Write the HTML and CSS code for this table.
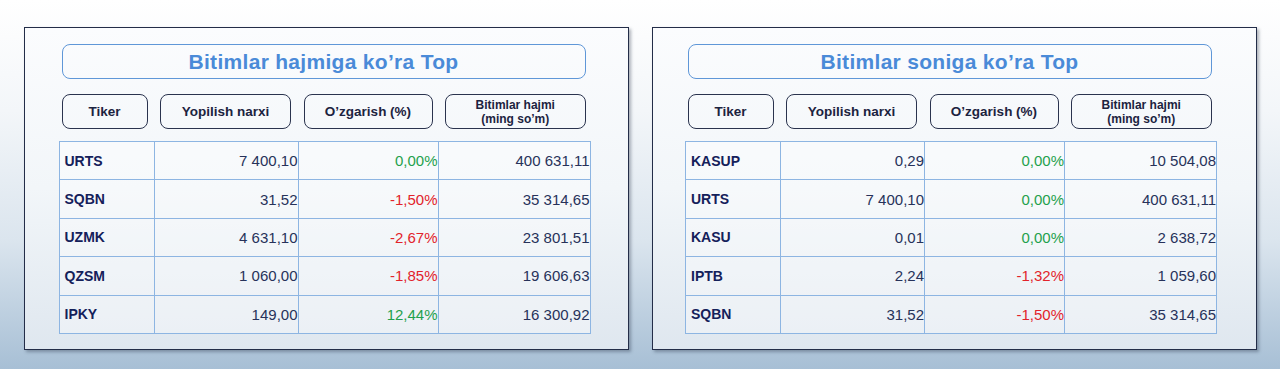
FILE: index.html
```html
<!DOCTYPE html>
<html lang="uz">
<head>
<meta charset="utf-8">
<title>Top</title>
<link rel="stylesheet" href="styles.css">
</head>
<body>
<div class="page">
  <section class="panel panel-left">
    <div class="title">Bitimlar hajmiga ko’ra Top</div>
    <div class="heads">
      <div class="head">Tiker</div>
      <div class="head">Yopilish narxi</div>
      <div class="head">O’zgarish (%)</div>
      <div class="head small">Bitimlar hajmi<br>(ming so’m)</div>
    </div>
    <table class="grid">
      <tr><td class="tk">URTS</td><td>7 400,10</td><td class="up">0,00%</td><td>400 631,11</td></tr>
      <tr><td class="tk">SQBN</td><td>31,52</td><td class="down">-1,50%</td><td>35 314,65</td></tr>
      <tr><td class="tk">UZMK</td><td>4 631,10</td><td class="down">-2,67%</td><td>23 801,51</td></tr>
      <tr><td class="tk">QZSM</td><td>1 060,00</td><td class="down">-1,85%</td><td>19 606,63</td></tr>
      <tr><td class="tk">IPKY</td><td>149,00</td><td class="up">12,44%</td><td>16 300,92</td></tr>
    </table>
  </section>
  <section class="panel panel-right">
    <div class="title">Bitimlar soniga ko’ra Top</div>
    <div class="heads">
      <div class="head">Tiker</div>
      <div class="head">Yopilish narxi</div>
      <div class="head">O’zgarish (%)</div>
      <div class="head small">Bitimlar hajmi<br>(ming so’m)</div>
    </div>
    <table class="grid">
      <tr><td class="tk">KASUP</td><td>0,29</td><td class="up">0,00%</td><td>10 504,08</td></tr>
      <tr><td class="tk">URTS</td><td>7 400,10</td><td class="up">0,00%</td><td>400 631,11</td></tr>
      <tr><td class="tk">KASU</td><td>0,01</td><td class="up">0,00%</td><td>2 638,72</td></tr>
      <tr><td class="tk">IPTB</td><td>2,24</td><td class="down">-1,32%</td><td>1 059,60</td></tr>
      <tr><td class="tk">SQBN</td><td>31,52</td><td class="down">-1,50%</td><td>35 314,65</td></tr>
    </table>
  </section>
</div>
</body>
</html>
```
FILE: styles.css
```css
* { box-sizing: border-box; }
html, body { margin: 0; padding: 0; }
body {
  width: 1280px;
  height: 369px;
  overflow: hidden;
  font-family: "Liberation Sans", Arial, sans-serif;
  background: linear-gradient(180deg, #ffffff 0%, #f3f6f9 30%, #dbe5ee 65%, #a7bfd5 100%);
}
.page {
  display: flex;
  gap: 23px;
  padding: 27px 0 0 24px;
}
.panel {
  width: 605px;
  height: 323px;
  border: 1.5px solid #232d48;
  background: linear-gradient(180deg, #fbfcfe 0%, #f2f6f9 50%, #dfe7ef 100%);
  box-shadow: 2px 2px 3px rgba(30, 40, 60, 0.35);
  padding-top: 16px;
}
.panel-left { padding-left: 36.5px; }
.panel-right { padding-left: 34.5px; }
.panel-left .grid { margin-left: -3px; width: 532px; }
.panel-right .grid { margin-left: -2.5px; width: 532px; }
.title {
  width: 524px;
  height: 35px;
  border: 1.5px solid #5f97d8;
  border-radius: 8px;
  color: #4a8ad8;
  font-weight: bold;
  font-size: 21px;
  display: flex;
  align-items: center;
  justify-content: center;
  letter-spacing: 0.3px;
}
.heads {
  display: grid;
  grid-template-columns: 86px 131px 129px 1fr;
  column-gap: 12.5px;
  width: 524px;
  margin-top: 15px;
}
.head {
  height: 35px;
  border: 1.5px solid #2a334e;
  border-radius: 8px;
  display: flex;
  align-items: center;
  justify-content: center;
  text-align: center;
  color: #1c2340;
  font-weight: bold;
  font-size: 13.5px;
}
.head.small {
  font-size: 12px;
  line-height: 14px;
}
.grid {
  margin-top: 12px;
  border-collapse: collapse;
  table-layout: fixed;
  background: rgba(255, 255, 255, 0.35);
}
.grid td {
  border: 1px solid #8db5e2;
  height: 38.4px;
  padding: 0;
  font-size: 15px;
  color: #27325a;
  text-align: right;
}
.grid td:nth-child(1) { width: 95px; }
.grid td:nth-child(2) { width: 144px; }
.grid td:nth-child(3) { width: 140px; }
.grid td.tk {
  text-align: left;
  padding-left: 5px;
  font-weight: bold;
  color: #14205a;
  font-size: 14px;
}
.grid td.up { color: #1fa14d; }
.grid td.down { color: #e2232b; }
```
